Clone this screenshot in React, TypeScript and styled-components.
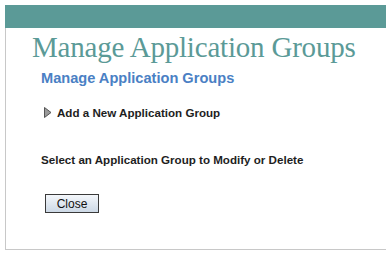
import React from 'react';
import styled, { createGlobalStyle } from 'styled-components';

const GlobalStyle = createGlobalStyle`
  html, body {
    margin: 0;
    padding: 0;
    background: #ffffff;
  }
  body {
    font-family: "Liberation Sans", Arial, sans-serif;
    overflow: hidden;
  }
`;

const Frame = styled.div`
  margin: 5px 0 0 5px;
  width: 381px;
`;

const HeaderBar = styled.div`
  height: 23px;
  background: #5b9a97;
`;

const Body = styled.div`
  box-sizing: border-box;
  height: 222px;
  border-left: 1px solid #c8c8c8;
  border-bottom: 1px solid #c8c8c8;
  padding: 3px 0 0 26px;
`;

const PageTitle = styled.h1`
  margin: 0;
  font-family: "Liberation Serif", "Times New Roman", serif;
  font-weight: normal;
  font-size: 29px;
  line-height: 32px;
  color: #5b9a97;
  letter-spacing: -0.2px;
`;

const Section = styled.div`
  padding: 6px 0 0 9px;
`;

const SectionTitle = styled.h2`
  margin: 0;
  font-size: 14.6px;
  font-weight: bold;
  color: #4a80c4;
  line-height: 18px;
`;

const ActionRow = styled.a`
  display: flex;
  align-items: center;
  gap: 5px;
  margin: 19px 0 0 3px;
  font-size: 11.6px;
  font-weight: bold;
  color: #1e1e1e;
  text-decoration: none;
  cursor: pointer;
`;

const Label = styled.p`
  margin: 34px 0 0 0;
  font-size: 11.6px;
  font-weight: bold;
  color: #1e1e1e;
`;

const Button = styled.button`
  display: block;
  margin: 28px 0 0 4px;
  width: 54px;
  height: 19px;
  padding: 0;
  font-family: "Liberation Sans", Arial, sans-serif;
  font-size: 12px;
  color: #111;
  border: 1px solid #3a3a3a;
  border-radius: 0;
  background: linear-gradient(#f4f7fb, #cdd9e6);
`;

const Arrow = () => (
  <svg width="8" height="11" viewBox="0 0 8 11">
    <path d="M0.5 0.5 L7 5.5 L0.5 10.5 Z" fill="#9a9a9a" stroke="#555" strokeWidth="1" />
  </svg>
);

export default function App() {
  return (
    <>
      <GlobalStyle />
      <Frame>
        <HeaderBar />
        <Body>
          <PageTitle>Manage Application Groups</PageTitle>
          <Section>
            <SectionTitle>Manage Application Groups</SectionTitle>
            <ActionRow>
              <Arrow />
              Add a New Application Group
            </ActionRow>
            <Label>Select an Application Group to Modify or Delete</Label>
            <Button>Close</Button>
          </Section>
        </Body>
      </Frame>
    </>
  );
}
